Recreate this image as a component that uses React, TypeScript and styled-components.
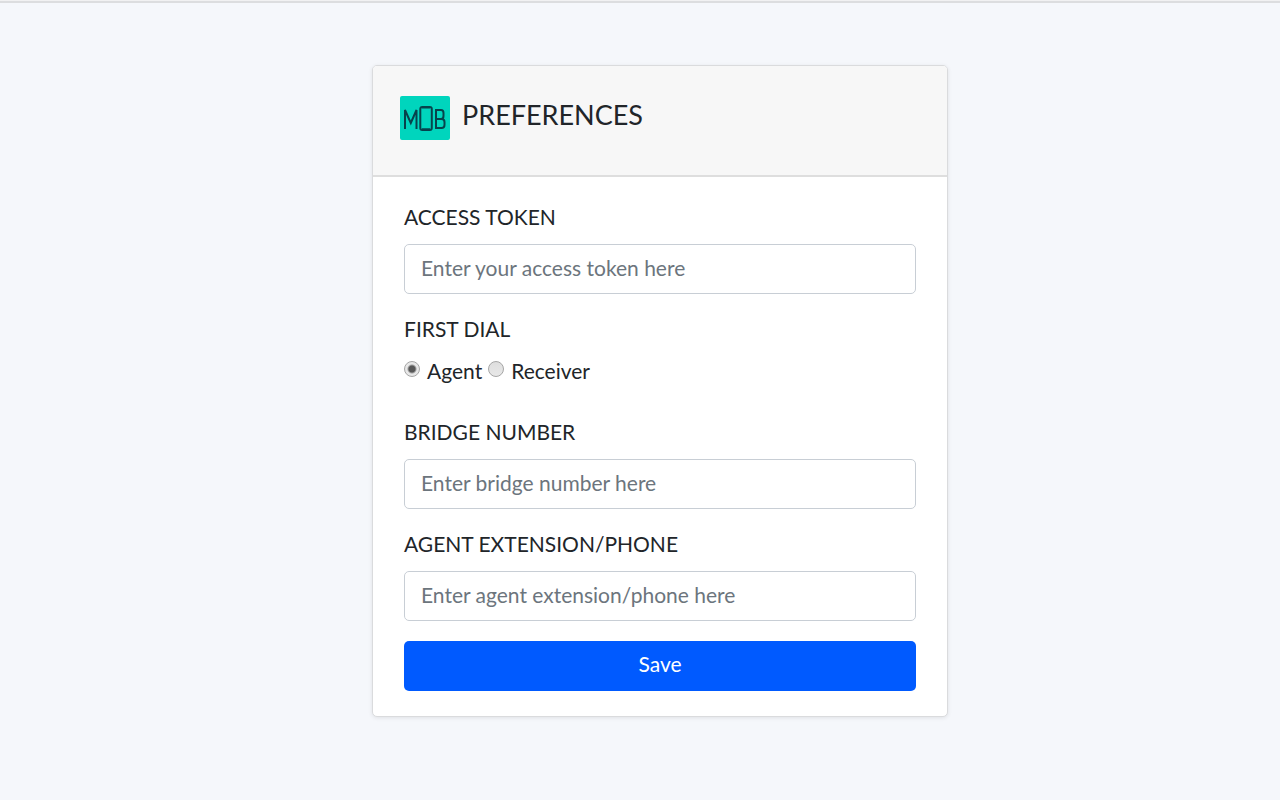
import React from 'react';
import styled, { createGlobalStyle } from 'styled-components';

const GlobalStyle = createGlobalStyle`
  *, *::before, *::after { box-sizing: border-box; }
  body {
    margin: 0;
    background: #f5f7fb;
    color: #212529;
    font-family: Lato, "Liberation Sans", sans-serif;
    font-size: 21px;
    line-height: 30px;
  }
`;

const TopBar = styled.header`
  height: 3px;
  background: #f1f1f2;
  border-bottom: 2px solid #dcdddf;
`;

const Page = styled.main`
  display: flex;
  justify-content: center;
  padding: 62px 0 62px 40px;
`;

const Card = styled.section`
  width: 45vw;
  min-width: 320px;
  background: #fff;
  border: 1px solid #dadbdd;
  border-radius: 5px;
  box-shadow: 0 1px 4px rgba(0, 0, 0, 0.09);
  overflow: hidden;
`;

const CardHeader = styled.div`
  display: flex;
  align-items: flex-start;
  gap: 12px;
  padding: 30px 27px 35px;
  background: #f7f7f7;
  border-bottom: 2px solid #dedede;
`;

const Logo = styled.svg`
  display: block;
  width: 50px;
  height: 44px;
`;

const Title = styled.h1`
  margin: 0;
  padding-top: 4px;
  font-size: 27px;
  font-weight: 400;
  line-height: 30px;
`;

const Form = styled.form`
  display: flex;
  flex-direction: column;
  gap: 20px;
  padding: 25px 31px;
`;

const Field = styled.div`
  display: flex;
  flex-direction: column;
  gap: 12px;
`;

const Group = styled.fieldset`
  margin: 0 0 11px;
  padding: 0;
  border: 0;
`;

const Legend = styled.legend`
  padding: 0;
  margin-bottom: 12px;
`;

const TextInput = styled.input`
  width: 100%;
  height: 50px;
  padding: 0 16px 4px;
  border: 1px solid #c8ced5;
  border-radius: 5px;
  background: #fff;
  color: #495057;
  font: inherit;
  &::placeholder { color: #6c757d; opacity: 1; }
`;

const Options = styled.div`
  display: flex;
  gap: 6px;
`;

const Option = styled.label`
  display: flex;
  align-items: flex-start;
  gap: 7px;
`;

const Radio = styled.input`
  appearance: none;
  width: 16px;
  height: 16px;
  margin: 5px 0 0;
  border: 1px solid #a6a6a6;
  border-radius: 50%;
  background: linear-gradient(#dedede, #e8e8e8);
  &:checked {
    background: radial-gradient(circle, #585858 0 3px, #e8e8e8 5px);
  }
`;

const SaveButton = styled.button`
  height: 50px;
  padding: 0 16px 4px;
  border: 0;
  border-radius: 5px;
  background: #005aff;
  color: #fff;
  font: inherit;
  cursor: pointer;
`;

type TextFieldProps = { id: string; label: string; placeholder: string };

const TextField = ({ id, label, placeholder }: TextFieldProps) => (
  <Field>
    <label htmlFor={id}>{label}</label>
    <TextInput id={id} type="text" placeholder={placeholder} />
  </Field>
);

const MobLogo = () => (
  <Logo viewBox="0 0 50 44" role="img" aria-label="MOB">
    <rect width="50" height="44" rx="2" fill="#00d5bd" />
    <g fill="none" stroke="#07434c" strokeWidth="2">
      <path d="M5 33V14L10.800 27L16.500 14V33" />
      <rect x="20.300" y="11" width="11.500" height="23" rx="2" />
      <path d="M22 11.300H30M22 33.500H30" strokeWidth="2.600" />
      <path d="M36 14V32H41.500Q44.500 32 44.500 29V26Q44.500 23 41.500 23H36H41Q43.500 23 43.500 20V17Q43.500 14 41 14Z" />
    </g>
  </Logo>
);

export default function App() {
  return (
    <>
      <GlobalStyle />
      <TopBar />
      <Page>
        <Card>
          <CardHeader>
            <MobLogo />
            <Title>PREFERENCES</Title>
          </CardHeader>
          <Form onSubmit={(event) => event.preventDefault()}>
            <TextField id="token" label="ACCESS TOKEN" placeholder="Enter your access token here" />
            <Group>
              <Legend>FIRST DIAL</Legend>
              <Options>
                <Option>
                  <Radio type="radio" name="dial" value="agent" defaultChecked />
                  Agent
                </Option>
                <Option>
                  <Radio type="radio" name="dial" value="receiver" />
                  Receiver
                </Option>
              </Options>
            </Group>
            <TextField id="bridge" label="BRIDGE NUMBER" placeholder="Enter bridge number here" />
            <TextField id="extension" label="AGENT EXTENSION/PHONE" placeholder="Enter agent extension/phone here" />
            <SaveButton type="submit">Save</SaveButton>
          </Form>
        </Card>
      </Page>
    </>
  );
}
